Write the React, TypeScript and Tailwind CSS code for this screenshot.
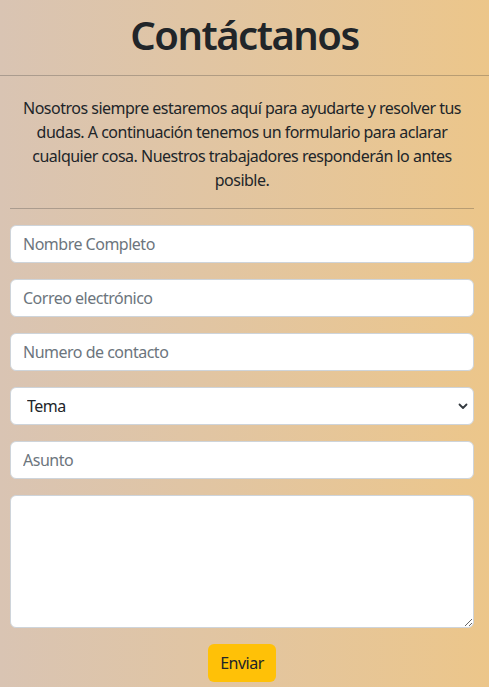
import React from "react";

export default function App() {
  const inputCls =
    "block w-full h-[38px] rounded-[6px] border border-[#ced4da] bg-white px-[12px] text-[16px] tracking-[-0.5px] text-[#212529] placeholder:text-[#6c757d] outline-none";
  return (
    <div
      className="min-h-screen w-full bg-gradient-to-r from-[#d9c4b3] to-[#ecc68a] text-[#212529]"
      style={{ fontFamily: '"Noto Sans", "Open Sans", sans-serif' }}
    >
      <h1 className="pt-[11px] text-center text-[40px] font-semibold leading-[48px] tracking-[-1.5px]">Contáctanos</h1>
      <hr className="mt-[16px] border-0 border-t border-[#212529] opacity-25" />
      <div className="ml-[10px] w-[464px]">
        <p className="mt-[20px] text-center text-[16px] leading-[24px] tracking-[-0.5px]">
          <span className="block whitespace-nowrap">Nosotros siempre estaremos aquí para ayudarte y resolver tus</span>
          <span className="block whitespace-nowrap">dudas. A continuación tenemos un formulario para aclarar</span>
          <span className="block whitespace-nowrap">cualquier cosa. Nuestros trabajadores responderán lo antes</span>
          <span className="block whitespace-nowrap">posible.</span>
        </p>
        <hr className="mt-[16px] border-0 border-t border-[#212529] opacity-25" />
        <form className="mt-[16px] flex flex-col gap-[16px]" onSubmit={(e) => e.preventDefault()}>
          <input className={inputCls} placeholder="Nombre Completo" />
          <input className={inputCls} placeholder="Correo electrónico" />
          <input className={inputCls} placeholder="Numero de contacto" />
          <div className="relative">
            <select className="block h-[38px] w-full appearance-none rounded-[6px] border border-[#ced4da] bg-white pl-[16px] pr-[36px] text-[16px] tracking-[-0.5px] text-[#212529] outline-none">
              <option>Tema</option>
            </select>
            <svg
              className="pointer-events-none absolute right-[6px] top-[16px]"
              width="10"
              height="7"
              viewBox="0 0 10 7"
              fill="none"
            >
              <path d="M1.5 1.5l3.5 3.5 3.5-3.5" stroke="#343a40" strokeWidth="1.8" strokeLinecap="round" strokeLinejoin="round" />
            </svg>
          </div>
          <input className={inputCls} placeholder="Asunto" />
          <textarea className="block h-[133px] w-full rounded-[6px] border border-[#ced4da] bg-white px-[12px] py-[6px] text-[16px] outline-none" />
          <div className="flex justify-center">
            <button
              type="submit"
              className="h-[38px] w-[68px] rounded-[6px] bg-[#ffc107] text-[16px] tracking-[-0.5px] text-[#212529]"
            >
              Enviar
            </button>
          </div>
        </form>
      </div>
    </div>
  );
}
